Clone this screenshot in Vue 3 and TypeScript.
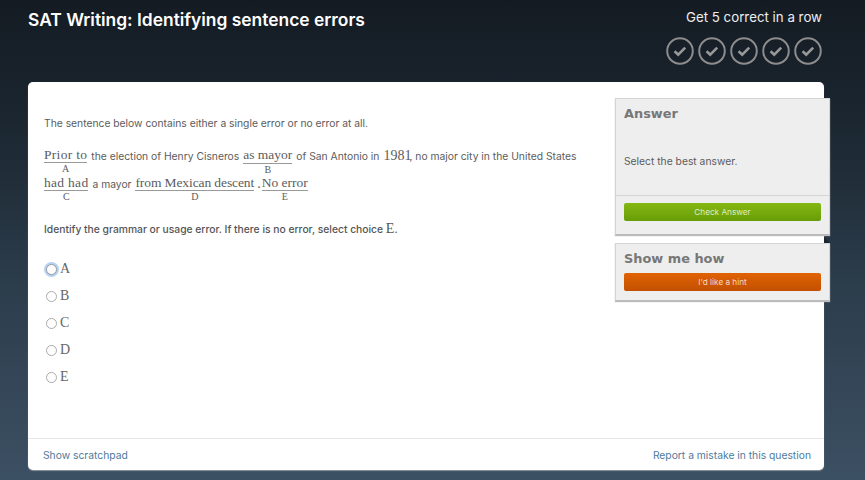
<script setup lang="ts">
const streak = [1, 2, 3, 4, 5];

const lineOne = [
  { text: "Prior to", label: "A", under: true, fit: "wide" },
  { text: "the election of Henry Cisneros", under: false },
  { text: "as mayor", label: "B", under: true, low: true },
  { text: "of San Antonio in", under: false },
  { text: "1981", under: false, math: true },
  { text: ", no major city in the United States", under: false, tight: true },
];
const lineTwo = [
  { text: "had had", label: "C", under: true, fit: "wide" },
  { text: "a mayor", under: false },
  { text: "from Mexican descent", label: "D", under: true, fit: "narrow" },
  { text: ".", under: false, math: true, fit: "dot" },
  { text: "No error", label: "E", under: true },
];
const lines = [lineOne, lineTwo];
const choices = ["A", "B", "C", "D", "E"];
</script>

<template>
  <div class="page">
    <header class="top">
      <h1>SAT Writing: Identifying sentence errors</h1>
      <div class="goal">
        <div class="goal-text">Get 5 correct in a row</div>
        <div class="marks">
          <svg v-for="n in streak" :key="n" width="28" height="28" viewBox="0 0 28 28">
            <circle cx="14" cy="14" r="12.8" fill="none" stroke="#8c8c8c" stroke-width="2" />
            <path d="M8.6 14.3l3.6 3.4 7-7" fill="none" stroke="#999" stroke-width="2.6" />
          </svg>
        </div>
      </div>
    </header>

    <main class="card">
      <div class="card-body">
        <section class="question">
          <p class="intro">The sentence below contains either a single error or no error at all.</p>
          <div class="sentence">
            <div v-for="(line, i) in lines" :key="i" class="line">
              <span
                v-for="part in line"
                :key="part.text"
                class="part"
                :class="[part.fit, { tight: part.tight, low: part.low }]"
              >
                <span :class="part.under ? 'under' : part.math ? 'num' : 'plain'">{{ part.text }}</span>
                <span v-if="part.label" class="letter">{{ part.label }}</span>
              </span>
            </div>
          </div>
          <p class="prompt">Identify the grammar or usage error. If there is no error, select choice <span class="num">E</span>.</p>
          <ul class="choices">
            <li v-for="(c, i) in choices" :key="c">
              <span class="radio" :class="{ focus: i === 0 }"></span>
              <span class="num">{{ c }}</span>
            </li>
          </ul>
        </section>

        <aside class="side">
          <div class="box answer">
            <h2>Answer</h2>
            <p>Select the best answer.</p>
            <div class="box-foot">
              <button class="btn green">Check Answer</button>
            </div>
          </div>
          <div class="box how">
            <h2>Show me how</h2>
            <button class="btn orange">I'd like a hint</button>
          </div>
        </aside>
      </div>
      <footer class="card-foot">
        <a>Show scratchpad</a>
        <a>Report a mistake in this question</a>
      </footer>
    </main>
  </div>
</template>

<style>
body {
  margin: 0;
}
</style>

<style scoped>
.page {
  width: 865px;
  height: 480px;
  box-sizing: border-box;
  padding: 0 41px 10px 28px;
  display: flex;
  flex-direction: column;
  overflow: hidden;
  background: linear-gradient(180deg, #141b23 0%, #1b2630 25%, #2c3d4c 60%, #3c5063 100%);
  font-family: Inter, "Liberation Sans", sans-serif;
  color: #5c5c5c;
}

.top {
  height: 82px;
  display: flex;
  justify-content: space-between;
  flex-shrink: 0;
}
h1 {
  margin: 9px 0 0;
  font-size: 17.4px;
  line-height: 22px;
  font-weight: 600;
  color: #fff;
}
.goal {
  margin-right: 2px;
  display: flex;
  flex-direction: column;
  align-items: flex-end;
}
.goal-text {
  margin-top: 8px;
  font-size: 13.3px;
  line-height: 18px;
  color: #eee;
}
.marks {
  margin-top: 11px;
  display: flex;
  gap: 4px;
}

.card {
  flex: 1;
  display: flex;
  flex-direction: column;
  background: #fff;
  border-radius: 5px;
  box-shadow: 0 1px 1px #8a949c;
}
.card-body {
  flex: 1;
  display: flex;
  justify-content: space-between;
}
.question {
  padding: 34px 0 0 16px;
}
.intro {
  margin: 0;
  font-size: 10.3px;
  line-height: 14px;
}
.sentence {
  margin-top: 16px;
}
.line {
  display: flex;
  gap: 4px;
  height: 28px;
  font-size: 10.3px;
}
.part {
  display: flex;
  flex-direction: column;
  align-items: center;
}
.part.tight {
  margin-left: -6px;
}
.part.dot {
  margin: 0 -3px 0 -1px;
}
.plain {
  line-height: 16px;
  margin-top: 2px;
}
.part > .num {
  margin-top: 2px;
}
.under {
  font-family: "Liberation Serif", serif;
  font-size: 13.5px;
  line-height: 15px;
  margin-top: 1px;
  border-bottom: 1px solid #999;
}
.wide .under {
  letter-spacing: 0.3px;
}
.narrow .under {
  letter-spacing: -0.1px;
}
.low .under {
  padding-bottom: 1px;
}
.letter {
  font-family: "Liberation Serif", serif;
  font-size: 10px;
  line-height: 8px;
  margin-top: 2px;
}
.num {
  font-family: "Liberation Serif", serif;
  font-size: 14px;
  line-height: 16px;
  font-weight: 400;
}
.prompt {
  margin: 19px 0 0;
  font-size: 10.3px;
  line-height: 16px;
  font-weight: 500;
  color: #555;
}
.choices {
  list-style: none;
  margin: 24px 0 0;
  padding: 0;
}
.choices li {
  height: 27px;
  display: flex;
  align-items: flex-start;
  gap: 3px;
  padding-left: 2px;
  color: #666;
}
.radio {
  width: 9px;
  height: 9px;
  margin-top: 3px;
  border: 1px solid #aaa;
  border-radius: 50%;
  background: #fff;
}
.radio.focus {
  border-color: #999;
  box-shadow: 0 0 0 2px #b4d3f2;
}

.side {
  width: 215px;
  margin: 16px -6px 0 0;
  flex-shrink: 0;
  display: flex;
  flex-direction: column;
  gap: 8px;
}
.box {
  background: #eee;
  border: 1px solid #d4d4d4;
  border-bottom-color: #bbb;
  box-shadow: 0 1px 1px #bbb;
  box-sizing: border-box;
  position: relative;
}
.box::before {
  content: "";
  position: absolute;
  top: -7px;
  right: -1px;
  border-left: 6px solid #1a2530;
  border-top: 6px solid transparent;
}
h2 {
  margin: 0;
  font-size: 12.9px;
  line-height: 18px;
  font-weight: 700;
  color: #777;
  font-family: "DejaVu Sans", sans-serif;
}
.answer {
  height: 137px;
  padding: 6px 0 0;
  display: flex;
  flex-direction: column;
}
.answer h2,
.answer p {
  padding: 0 8px;
}
.answer p {
  margin: 31px 0 0;
  font-size: 10.3px;
  line-height: 14px;
  flex: 1;
}
.box-foot {
  border-top: 1px solid #d4d4d4;
  padding: 7px 8px 0;
  height: 39px;
  box-sizing: border-box;
}
.how {
  height: 58px;
  padding: 6px 8px 0;
}
.btn {
  display: block;
  width: 197px;
  height: 18px;
  padding: 0;
  border: 0;
  border-radius: 2px;
  color: #dfeec5;
  font-family: Inter, sans-serif;
  font-size: 8.2px;
}
.green {
  background: linear-gradient(180deg, #86b812, #679d08);
}
.orange {
  margin-top: 5px;
  background: linear-gradient(180deg, #e16203, #c25002);
  color: #f5d8c4;
}

.card-foot {
  height: 31px;
  flex-shrink: 0;
  border-top: 1px solid #e6e6e6;
  display: flex;
  align-items: center;
  justify-content: space-between;
  padding: 0 13px 0 15px;
  font-size: 10.3px;
  color: #4f7b9d;
}
</style>
